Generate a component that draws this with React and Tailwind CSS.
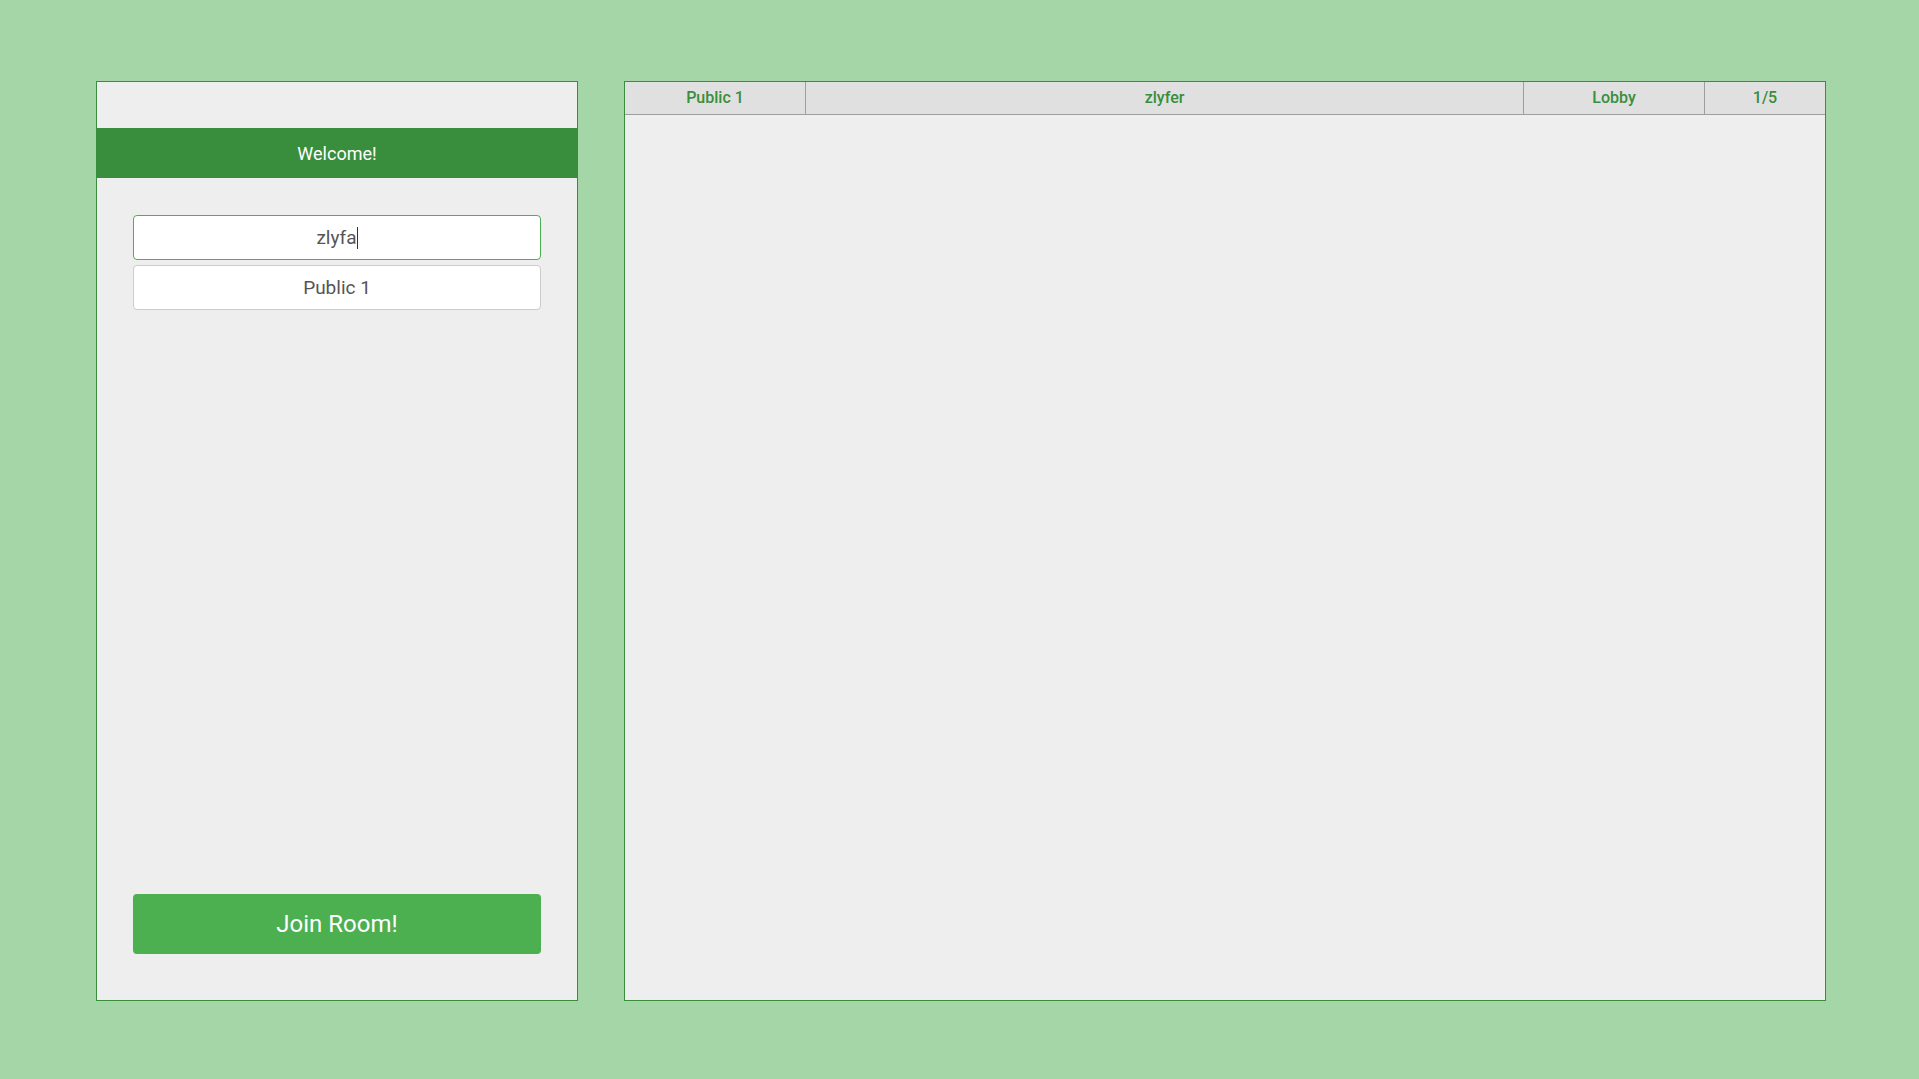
import React from 'react';

const Column = ({ className, children, last }) => (
  <div
    className={`flex items-center justify-center text-[16px] font-medium text-[#388e3c] ${
      last ? '' : 'border-r border-[#9e9e9e]'
    } ${className}`}
  >
    {children}
  </div>
);

const App = () => {
  return (
    <div
      className="min-h-screen w-full bg-[#a5d6a7] flex items-start gap-[46px] pl-[96px] pt-[81px]"
      style={{ fontFamily: 'Roboto, "Liberation Sans", sans-serif' }}
    >
      <div className="w-[482px] h-[920px] bg-[#eeeeee] border border-[#388e3c] flex flex-col">
        <div className="h-[46px]" />
        <div className="h-[50px] bg-[#388e3c] flex items-center justify-center text-white text-[18px]">
          Welcome!
        </div>
        <div className="flex-1 flex flex-col px-[36px] pt-[37px] pb-[46px]">
          <div className="h-[45px] pt-px bg-white border border-[#4caf50] rounded-[4px] flex items-center justify-center text-[19px] text-[#555555]">
            <span>zlyfa</span>
            <span className="inline-block w-px h-[22px] bg-[#333333]" />
          </div>
          <div className="mt-[5px] h-[45px] pt-px bg-white border border-[#cccccc] rounded-[4px] flex items-center justify-center text-[19px] text-[#555555]">
            Public 1
          </div>
          <div className="flex-1" />
          <button className="h-[60px] bg-[#4caf50] rounded-[4px] text-white text-[24px]">
            Join Room!
          </button>
        </div>
      </div>

      <div className="w-[1202px] h-[920px] bg-[#eeeeee] border border-[#388e3c] flex flex-col">
        <div className="h-[33px] bg-[#e0e0e0] border-b border-[#9e9e9e] flex">
          <Column className="w-[181px]">Public 1</Column>
          <Column className="flex-1">zlyfer</Column>
          <Column className="w-[181px]">Lobby</Column>
          <Column className="w-[120px]" last>
            1/5
          </Column>
        </div>
      </div>
    </div>
  );
};

export default App;
